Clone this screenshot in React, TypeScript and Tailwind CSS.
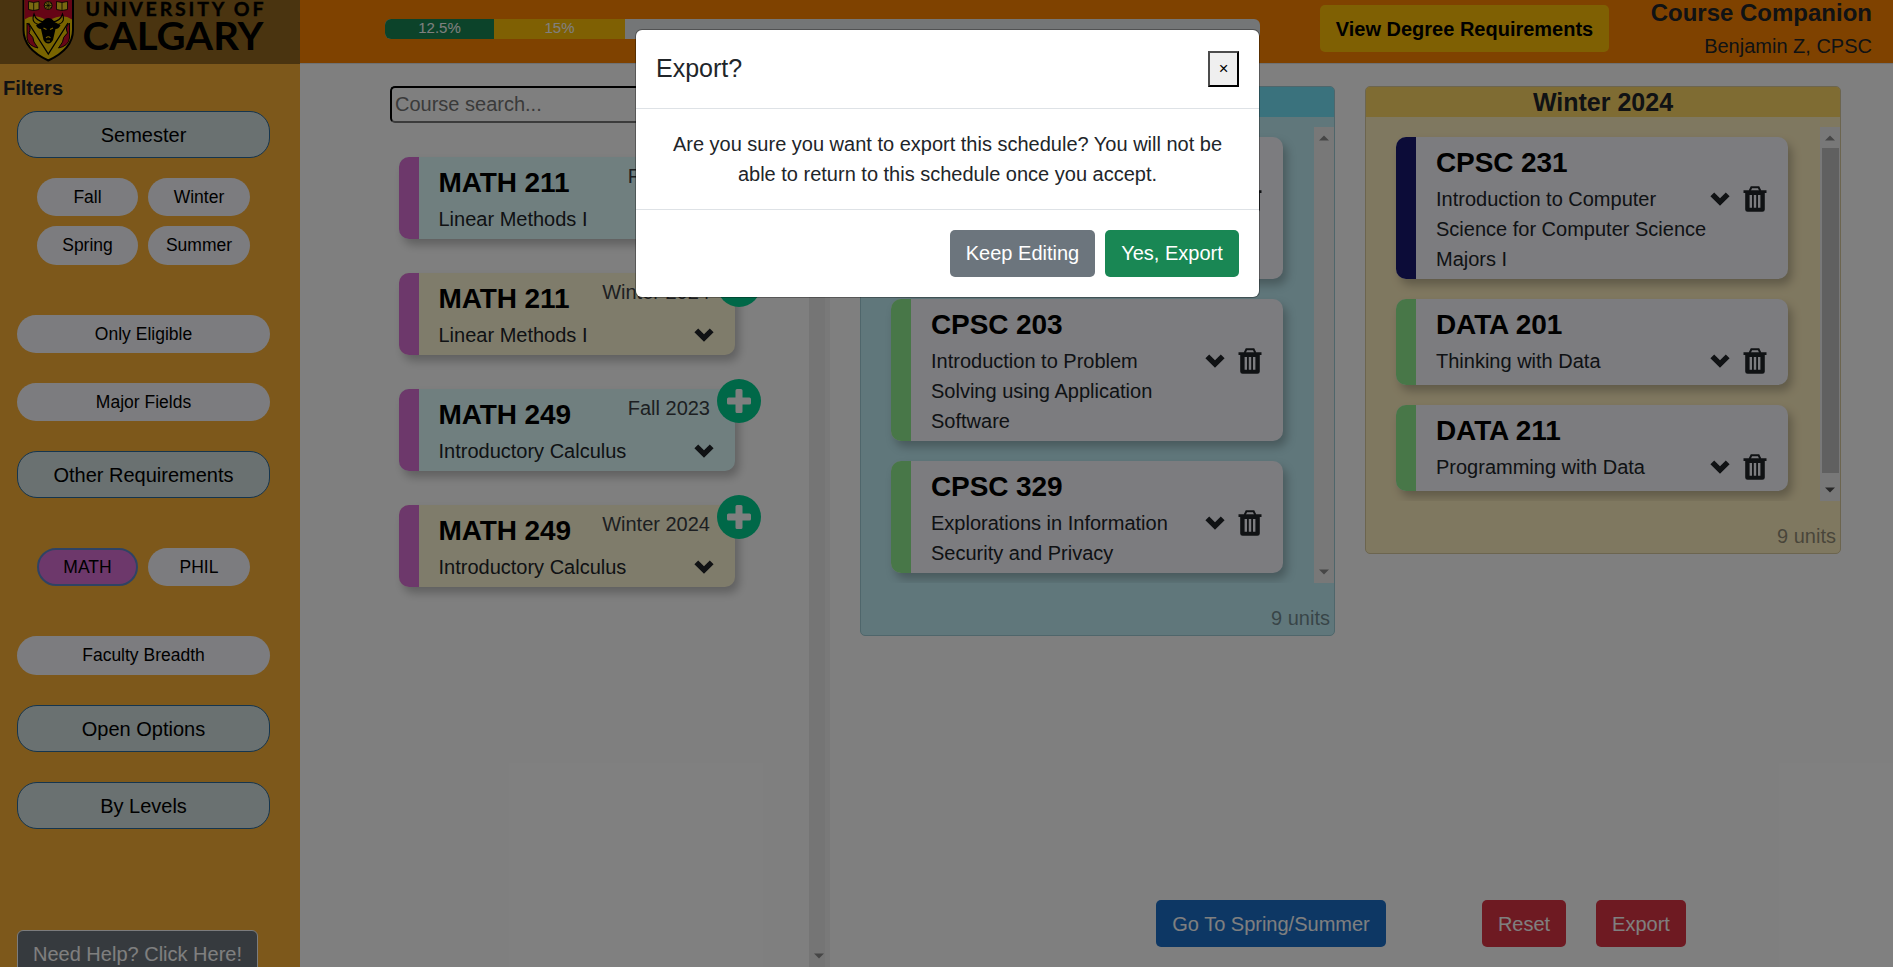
import type { ReactNode } from "react";

type Course = { code: string; title: string; term?: string; bar: string; tone: string; height: string };

const results: Course[] = [
  { code: "MATH 211", title: "Linear Methods I", term: "Fall 2023", bar: "bg-[#da70d6]", tone: "bg-[#e0ffff]", height: "h-[82px]" },
  { code: "MATH 211", title: "Linear Methods I", term: "Winter 2024", bar: "bg-[#da70d6]", tone: "bg-[#fff8d6]", height: "h-[82px]" },
  { code: "MATH 249", title: "Introductory Calculus", term: "Fall 2023", bar: "bg-[#da70d6]", tone: "bg-[#e0ffff]", height: "h-[82px]" },
  { code: "MATH 249", title: "Introductory Calculus", term: "Winter 2024", bar: "bg-[#da70d6]", tone: "bg-[#fff8d6]", height: "h-[82px]" },
];

const fall: Course[] = [
  { code: "CPSC 251", title: "Introduction to Data\nand Software\nMajors", bar: "bg-[#191970]", tone: "bg-[#f8f8ff]", height: "h-[142px]" },
  { code: "CPSC 203", title: "Introduction to Problem\nSolving using Application\nSoftware", bar: "bg-[#90ee90]", tone: "bg-[#f8f8ff]", height: "h-[142px]" },
  { code: "CPSC 329", title: "Explorations in Information\nSecurity and Privacy", bar: "bg-[#90ee90]", tone: "bg-[#f8f8ff]", height: "h-[112px]" },
];

const winter: Course[] = [
  { code: "CPSC 231", title: "Introduction to Computer\nScience for Computer Science\nMajors I", bar: "bg-[#191970]", tone: "bg-[#f8f8ff]", height: "h-[142px]" },
  { code: "DATA 201", title: "Thinking with Data", bar: "bg-[#90ee90]", tone: "bg-[#f8f8ff]", height: "h-[86px]" },
  { code: "DATA 211", title: "Programming with Data", bar: "bg-[#90ee90]", tone: "bg-[#f8f8ff]", height: "h-[86px]" },
];

function Chevron() {
  return (
    <svg width="20" height="14" viewBox="0 0 20 14" className="shrink-0 fill-[#212529]">
      <path d="M0.4 4.2 4.2 0.4 10 6.2 15.8 0.4 19.6 4.2 10 13.8Z" />
    </svg>
  );
}

function Trash() {
  return (
    <svg width="24" height="26" viewBox="0 0 24 26" className="shrink-0">
      <path d="M6.6 5 8.4 1.2H15.6L17.4 5" fill="none" stroke="#212529" strokeWidth="2" />
      <path d="M0.5 4.3H23.5V7H21.8V23.4Q21.8 25.8 19.4 25.8H4.6Q2.2 25.8 2.2 23.4V7H0.5Z" fill="#212529" />
      <path d="M7.8 9V21.8M12 9V21.8M16.2 9V21.8" stroke="#f8f8ff" strokeWidth="2.4" />
    </svg>
  );
}

function ResultCard({ c }: { c: Course }) {
  return (
    <div className={`relative flex w-[336px] ${c.height}`}>
      <div className={`flex w-full overflow-hidden rounded-[10px] shadow-[4px_6px_10px_rgba(0,0,0,0.25)] ${c.tone}`}>
        <div className={`w-5 ${c.bar}`} />
        <div className="flex-1 pl-[19.5px]">
          <div className="flex justify-between pr-[25px]">
            <h3 className="mt-[9px] text-[28px]/[34px] font-bold tracking-[-0.1px] text-black">{c.code}</h3>
            <span className="mt-1 text-[20px]/[30px] text-[#3a3f44]">{c.term}</span>
          </div>
          <div className="mt-[3px] flex items-center justify-between pr-[21px]">
            <p className="text-[20px]/[32px]">{c.title}</p>
            <Chevron />
          </div>
        </div>
      </div>
      <div className="absolute -top-[10px] left-[318px] flex size-11 items-center justify-center rounded-full bg-[#00d090]">
        <svg width="24" height="24" viewBox="0 0 24 24" className="fill-white">
          <path d="M10 0H14Q15.500 0 15.500 1.500V8.500H22.500Q24 8.500 24 10V14Q24 15.500 22.500 15.500H15.500V22.500Q15.500 24 14 24H10Q8.500 24 8.500 22.500V15.500H1.500Q0 15.500 0 14V10Q0 8.500 1.500 8.500H8.500V1.500Q8.500 0 10 0Z" />
        </svg>
      </div>
    </div>
  );
}

function PlanCard({ c }: { c: Course }) {
  return (
    <div className={`flex w-[392px] shrink-0 overflow-hidden rounded-[10px] shadow-[4px_6px_10px_rgba(0,0,0,0.25)] ${c.height} ${c.tone}`}>
      <div className={`w-5 shrink-0 ${c.bar}`} />
      <div className="w-[294px] shrink-0 pl-5">
        <h3 className="mt-[9px] text-[28px]/[34px] font-bold tracking-[-0.1px] text-black">{c.code}</h3>
        <p className="mt-1 text-[20px]/[30px] whitespace-pre">{c.title}</p>
      </div>
      <div className="mt-[49px] flex h-[26px] items-center gap-[13px]">
        <Chevron />
        <Trash />
      </div>
    </div>
  );
}

function Arrow({ up = false, strong = false }: { up?: boolean; strong?: boolean }) {
  return (
    <svg width="10" height="6" viewBox="0 0 10 6" className={strong ? "fill-[#505050]" : "fill-[#8c8c8c]"}>
      <path d={up ? "M0 5.5 5 0.5 10 5.5Z" : "M0 0.5 5 5.5 10 0.5Z"} />
    </svg>
  );
}

function Term({
  name, courses, tone, head, border, height, thumb,
}: { name: string; courses: Course[]; tone: string; head: string; border: string; height: string; thumb?: boolean }) {
  return (
    <section className={`flex flex-col overflow-hidden rounded-[5px] border ${border} ${tone} ${height}`}>
      <h2 className={`h-[30px] shrink-0 text-center text-[25px]/[30px] font-bold ${head}`}>{name}</h2>
      <div className="mt-[10px] flex min-h-0 flex-1 justify-between overflow-hidden">
        <div className="flex flex-col gap-5 pt-[10px] pl-[30px]">
          {courses.map((c) => <PlanCard key={c.code} c={c} />)}
        </div>
        <div className="flex w-5 flex-col items-center justify-between bg-[#f1f1f1] pt-2 pb-2">
          <Arrow up />
          {thumb && <div className="mt-[7px] mb-[14px] w-[17px] flex-1 bg-[#c1c1c1]" />}
          <Arrow strong={thumb} />
        </div>
      </div>
      <p className="h-[52px] shrink-0 pt-5 pr-1 text-right text-[20px]/[30px] text-[#212529]/50">9 units</p>
    </section>
  );
}

function Major({ children }: { children: ReactNode }) {
  return (
    <button className="h-[47px] w-[253px] shrink-0 rounded-[20px] border border-[#2a6a9c] bg-[#d4e2e2] text-[20px]/[30px] text-black">
      {children}
    </button>
  );
}

function Wide({ children, tall }: { children: ReactNode; tall?: boolean }) {
  return (
    <button className={`w-[253px] shrink-0 rounded-[20px] bg-[#f8f8ff] text-[17.5px] text-black ${tall ? "h-[39px] pb-px" : "h-[38px]"}`}>
      {children}
    </button>
  );
}

function Pill({ children, on, tall }: { children: ReactNode; on?: boolean; tall?: boolean }) {
  return (
    <button
      className={`w-full rounded-[20px] text-[17.5px] text-black ${tall ? "h-[39px] pb-px" : "h-[38px]"} ${on ? "border-2 border-[#5f86c8] bg-[#da70d6]" : "bg-[#f8f8ff]"}`}
    >
      {children}
    </button>
  );
}

function Logo() {
  return (
    <svg width="300" height="64" viewBox="0 0 300 64" className="block shrink-0 bg-[#946820]">
      <path d="M23.500 -6H73V30Q73 49 48.300 60.500 23.500 49 23.500 30Z" fill="#f2c800" stroke="#000" strokeWidth="2" />
      <path d="M24.500 -5H72V19.500Q66 15.500 60 16.500 52 18 48 21 44 18 37 16.500 30 15.500 24.500 19.500Z" fill="#cc0a2c" />
      <path d="M28.500 1.500 33.500 2.500 39 1.500V9.500L33.500 10.500 28.500 9.500ZM56.500 1.500 62 2.500 67.500 1.500V9.500L62 10.500 56.500 9.500Z" fill="#f2d020" stroke="#000" strokeWidth="0.8" />
      <path d="M33.700 2.500V10.500M62 2.500V10.500" stroke="#000" strokeWidth="0.8" />
      <circle cx="48.200" cy="5.500" r="4" fill="#f2d020" stroke="#000" strokeWidth="0.9" />
      <path d="M48.200 2V9M44.700 5.500H51.700M45.800 3 50.600 8M50.600 3 45.800 8" stroke="#000" strokeWidth="0.7" />
      <path d="M27 23Q32 27 29 33 34 37 34 42 36 45 38 48 28 46 27 38ZM69.500 23Q64.500 27 67.500 33 62.500 37 62.500 42 60.500 45 58.500 48 68.500 46 69.500 38Z" fill="#cc0a2c" stroke="#000" strokeWidth="0.9" />
      <path d="M28.500 23 48.300 54 68 23" fill="none" stroke="#000" strokeWidth="1.300" />
      <path d="M34 14Q30 24 42 25L44 22Q36 21 34 14ZM62.500 14Q66.500 24 54.500 25L52.500 22Q60.500 21 62.500 14Z" fill="#f2c800" stroke="#000" strokeWidth="1.100" />
      <path d="M42 22Q45 18 48.300 18 52 18 54.500 22L60.500 25Q59 29 55.500 29L53 40Q51 43.500 48.300 43.500 45.500 43.500 43.500 40L41 29Q37.500 29 36 25Z" fill="#000" />
      <path d="M43.500 28 46.500 29.500M53 28 50 29.500M46 38Q48.300 35.500 50.500 38M46.500 41H50" fill="none" stroke="#f2c800" strokeWidth="1.100" />
      <text x="85.500" y="15.700" textLength="178" lengthAdjust="spacing" className="fill-black stroke-black stroke-[0.4px] font-['Lato'] text-[19.500px] font-bold">UNIVERSITY OF</text>
      <text x="82.500" y="49.500" textLength="181" lengthAdjust="spacingAndGlyphs" className="fill-black font-['Lato'] text-[38.500px] font-bold">CALGARY</text>
    </svg>
  );
}

export default function App() {
  return (
    <div className="relative flex h-screen w-full overflow-hidden bg-white font-['Liberation_Sans',Arial,sans-serif] text-[20px]/[30px] text-[#212529]">
      <aside className="flex w-[300px] shrink-0 flex-col overflow-hidden bg-[#fab036]">
        <Logo />
        <h2 className="mt-[9px] pl-[3px] font-bold">Filters</h2>
        <div className="flex flex-col items-start pt-2 pl-[17px]">
          <Major>Semester</Major>
          <div className="mt-5 ml-5 grid grid-cols-[101px_102px] gap-[10px]">
            <Pill>Fall</Pill>
            <Pill>Winter</Pill>
            <Pill tall>Spring</Pill>
            <Pill tall>Summer</Pill>
          </div>
          <div className="mt-[50px] flex flex-col gap-[30px]">
            <Wide>Only Eligible</Wide>
            <Wide>Major Fields</Wide>
            <Major>Other Requirements</Major>
          </div>
          <div className="mt-[50px] ml-5 grid grid-cols-[101px_102px] gap-[10px]">
            <Pill on>MATH</Pill>
            <Pill>PHIL</Pill>
          </div>
          <div className="mt-[50px] flex flex-col gap-[30px]">
            <Wide tall>Faculty Breadth</Wide>
            <Major>Open Options</Major>
            <Major>By Levels</Major>
          </div>
          <button className="mt-[101px] h-[48px] w-[241px] shrink-0 rounded-[6px] border border-[#f8f9fa] bg-[#6c757d] text-white">
            Need Help? Click Here!
          </button>
        </div>
      </aside>

      <div className="flex min-w-0 flex-1 flex-col">
        <header className="flex h-16 shrink-0 items-start border-b border-[#dee2e6] bg-[#ff8400] pl-[85px]">
          <div className="mt-[19px] flex h-5 w-[875px] overflow-hidden rounded-[6px] bg-[#e9ecef] text-center text-[15px]/[18px] text-white">
            <div className="w-[109px] bg-[#198754]">12.5%</div>
            <div className="w-[131px] bg-[#ffc107]">15%</div>
          </div>
          <button className="mt-[5px] ml-[60px] h-[47px] w-[289px] rounded-[5px] bg-[#ffc107] font-bold text-black">
            View Degree Requirements
          </button>
          <div className="flex-1 pr-[21px] text-right">
            <h1 className="-mt-[2px] text-[24px]/[30px] font-bold">Course Companion</h1>
            <p className="mt-[3px]">Benjamin Z, CPSC</p>
          </div>
        </header>

        <div className="flex min-h-0 flex-1">
          <div className="flex w-[509px] shrink-0 flex-col pt-[22px] pl-[90px]">
            <input
              placeholder="Course search..."
              className="h-[37px] w-[354px] rounded-[5px] border-2 border-t-black border-r-[#767676] border-b-[#767676] border-l-black bg-white px-[3px] placeholder:text-[#757575]"
            />
            <div className="mt-[34px] flex flex-col gap-[34px] pl-[9px]">
              {results.map((c, i) => <ResultCard key={i} c={c} />)}
            </div>
          </div>
          <div className="flex w-[21px] shrink-0 flex-col items-center justify-end border-r-[5px] border-[#f3f3f3] bg-[#ebebeb] pb-2">
            <div className="pl-1"><Arrow /></div>
          </div>

          <main className="flex flex-1 flex-col justify-between pt-[22px] pb-5 pl-[30px]">
            <div className="grid grid-cols-[475px_476px] items-start gap-[30px]">
              <Term name="Fall 2023" courses={fall} tone="bg-[#c0eef6]" head="bg-[#74e4fa]" border="border-[#9fcdd6]" height="h-[550px]" />
              <Term name="Winter 2024" courses={winter} tone="bg-[#fff0c0]" head="bg-[#ffd966]" border="border-[#d8ca9e]" height="h-[468px]" thumb />
            </div>
            <div className="flex pl-[296px] text-white">
              <button className="h-[47px] w-[230px] rounded-[5px] bg-[#1a6ec8]">Go To Spring/Summer</button>
              <button className="ml-24 h-[47px] w-[84px] rounded-[5px] bg-[#dc3545]">Reset</button>
              <button className="ml-[30px] h-[47px] w-[90px] rounded-[5px] bg-[#dc3545]">Export</button>
            </div>
          </main>
        </div>
      </div>

      <div className="absolute inset-0 flex items-start justify-center bg-black/50 pt-[30px] pl-[2px]">
        <div role="dialog" className="w-[623px] rounded-[6px] bg-white shadow-[0_0_0_1px_rgba(0,0,0,0.3)]">
          <div className="flex h-[79px] items-center justify-between border-b border-[#dee2e6] px-5">
            <h4 className="pb-0.5 text-[25px]/[37px]">Export?</h4>
            <button className="h-9 w-[31px] border-2 border-t-[#4c4c4c] border-r-black border-b-black border-l-[#4c4c4c] bg-[#efefef] text-[16.667px] text-black">
              ×
            </button>
          </div>
          <p className="h-[101px] border-b border-[#dee2e6] px-5 pt-5 text-center">
            Are you sure you want to export this schedule? You will not be
            <br />
            able to return to this schedule once you accept.
          </p>
          <div className="flex h-[87px] items-center justify-end gap-[10px] px-5 text-white">
            <button className="h-[47px] w-[145px] rounded-[5px] bg-[#6c757d] pb-0.5">Keep Editing</button>
            <button className="h-[47px] w-[134px] rounded-[5px] bg-[#198754] pb-0.5">Yes, Export</button>
          </div>
        </div>
      </div>
    </div>
  );
}
